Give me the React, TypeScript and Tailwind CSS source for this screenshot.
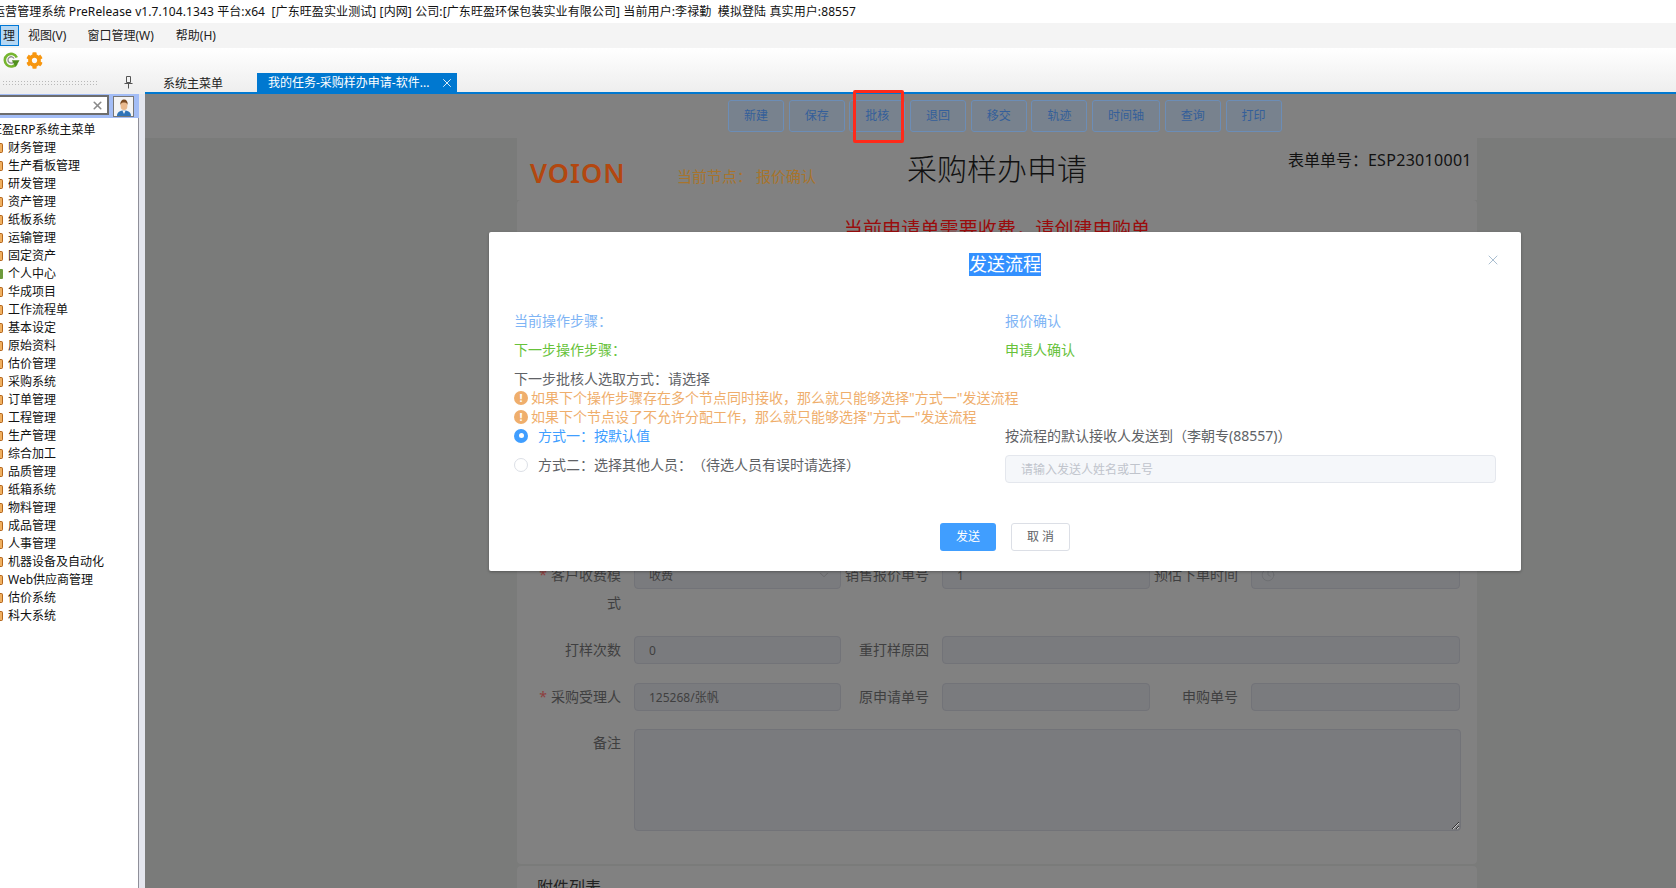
import { ChevronDown, Clock, X } from 'lucide-react';
import { FaCog } from 'react-icons/fa';

const menuItems = [
  '财务管理', '生产看板管理', '研发管理', '资产管理', '纸板系统', '运输管理', '固定资产', '个人中心', '华成项目',
  '工作流程单', '基本设定', '原始资料', '估价管理', '采购系统', '订单管理', '工程管理', '生产管理', '综合加工',
  '品质管理', '纸箱系统', '物料管理', '成品管理', '人事管理', '机器设备及自动化', 'Web供应商管理', '估价系统', '科大系统',
];

const actions = [
  { label: '新建', w: 'w-[56px]' },
  { label: '保存', w: 'w-[56px]' },
  { label: '批核', w: 'w-[56px]' },
  { label: '退回', w: 'w-[56px]' },
  { label: '移交', w: 'w-[56px]' },
  { label: '轨迹', w: 'w-[56px]' },
  { label: '时间轴', w: 'w-[68px]' },
  { label: '查询', w: 'w-[56px]' },
  { label: '打印', w: 'w-[56px]' },
];

function RefreshIcon() {
  return (
    <svg width="17" height="17" viewBox="0 0 17 17" fill="none">
      <path d="M13.500 11.500A6.300 6.300 0 1 1 13.800 5.500" stroke="#76b52f" strokeWidth="2.600" />
      <path d="M10.800 9.800A3.200 3.200 0 1 1 11 6.500" stroke="#8d8d8d" strokeWidth="1.300" />
      <path d="M8.800 8.200h7.700l-3.800 6.800z" fill="#4f8f1e" />
    </svg>
  );
}

function AvatarIcon() {
  return (
    <svg width="16" height="17" viewBox="0 0 16 17">
      <path d="M1 17c0-4 3-5.500 7-5.500s7 1.500 7 5.500z" fill="#2f74b8" />
      <path d="M6.400 11.500 8 15l1.600-3.500z" fill="#f4f4f4" />
      <ellipse cx="8" cy="6.500" rx="3.400" ry="4.600" fill="#e9b98e" />
      <path d="M4.400 6c-.4-3.600 1.600-5.500 3.800-5.500S12 2.400 11.600 6c-.6-1.800-1.800-2.400-3.600-2.400S5 4.200 4.400 6z" fill="#7a4a22" />
    </svg>
  );
}

function PinIcon() {
  return (
    <svg width="9" height="13" viewBox="0 0 9 13" fill="none" stroke="#555">
      <path d="M2.500 .5h4v6h-4z" />
      <path d="M.5 7.500h8M4.500 7.500v5" />
    </svg>
  );
}

function WarnIcon() {
  return (
    <span className="flex h-[14px] w-[14px] shrink-0 items-center justify-center rounded-full bg-[#efae6c] text-[11px] leading-none font-bold text-white">
      !
    </span>
  );
}

function Field({
  label,
  required,
  labelWidth,
  inputWidth,
  value,
  children,
}: {
  label: string;
  required?: boolean;
  labelWidth: string;
  inputWidth: string;
  value?: string;
  children?: React.ReactNode;
}) {
  return (
    <div className="flex items-start">
      <label className={`${labelWidth} shrink-0 pr-[13px] text-right text-[14px] leading-[28px] text-[#3f3f40]`}>
        {required && <span className="mr-1 text-[#8e3e3e]">*</span>}
        {label}
      </label>
      <div className={`${inputWidth} relative h-[28px] shrink-0`}>
        <input
          readOnly
          value={value ?? ''}
          className="h-full w-full rounded-[4px] border border-[#727378] bg-[#7a7b7e] px-[14px] text-[12px] text-[#3f3f40] outline-none"
        />
        {children}
      </div>
    </div>
  );
}

function TitleBar() {
  return (
    <div className="h-[23px] shrink-0 overflow-hidden bg-white pt-[3px] text-[12px] leading-[17px] tracking-[0.1px] whitespace-pre text-[#111]">
      <div className="ml-[-7px]">
        运营管理系统 PreRelease v1.7.104.1343 平台:x64  [广东旺盈实业测试] [内网] 公司:[广东旺盈环保包装实业有限公司] 当前用户:李禄勤  模拟登陆 真实用户:88557
      </div>
    </div>
  );
}

function MenuBar() {
  return (
    <div className="flex h-[25px] shrink-0 items-center bg-[#f4f4f4] text-[12px] text-[#222]">
      <div className="flex h-[21px] w-[19px] items-center justify-end border border-[#0078d7] bg-[#b5d7f3] pr-[3px]">理</div>
      <span className="ml-[9px]">视图(V)</span>
      <span className="ml-[21px]">窗口管理(W)</span>
      <span className="ml-[22px]">帮助(H)</span>
    </div>
  );
}

function Toolbar() {
  return (
    <div className="h-[44px] shrink-0 bg-gradient-to-b from-white to-[#eeeeee]">
      <div className="flex h-[24px] items-center gap-[6px] pl-[3px] pt-[1px]">
        <RefreshIcon />
        <FaCog size={17} color="#f7960f" />
      </div>
      <div className="flex h-[20px] items-center">
        <div className="ml-[2px] h-[5px] w-[97px] bg-[radial-gradient(#b9b9b9_0.8px,transparent_0.9px)] bg-[length:3px_3px]" />
        <div className="ml-[25px] flex w-[38px]">
          <PinIcon />
        </div>
        <div className="mr-[33px] w-[62px] pt-[3px] text-center text-[12px] text-[#222]">系统主菜单</div>
        <div className="mt-[1px] flex h-[19px] w-[200px] items-center bg-[#0078d0] pt-[1px] pl-[11px] text-[12px] text-white">
          <span className="w-[172px]">我的任务-采购样办申请-软件...</span>
          <X size={14} strokeWidth={1.5} />
        </div>
      </div>
    </div>
  );
}

function Sidebar() {
  return (
    <aside className="flex h-full w-[145px] shrink-0 flex-col bg-[#e4e6ee]">
      <div className="h-[2px] shrink-0 bg-[#eeeeee]" />
      <div className="flex h-[24px] w-[139px] shrink-0 items-start bg-[#a3bdf6] pt-[1px]">
        <div className="flex h-[20px] w-[109px] items-center justify-end border-y-2 border-r-2 border-[#6d6d6d] bg-white pr-[3px]">
          <X size={13} strokeWidth={3} color="#8a8a8a" />
        </div>
        <div className="mt-[1px] ml-[4px] flex h-[21px] w-[21px] items-end justify-center border border-[#777] bg-[#f4f4f4]">
          <AvatarIcon />
        </div>
      </div>
      <div className="min-h-0 w-[139px] flex-1 overflow-hidden border-r border-[#8f8f99] bg-white pt-[3px] text-[12px] leading-[18px] text-[#111]">
        <div className="ml-[-10px] whitespace-nowrap">旺盈ERP系统主菜单</div>
        {menuItems.map((item) => (
          <div key={item} className="flex h-[18px] items-center">
            <span
              className={
                item === '个人中心'
                  ? 'mr-[5px] h-[10px] w-[3px] rounded-r-[1px] bg-[#6d9a3c]'
                  : 'mr-[5px] h-[10px] w-[3px] rounded-r-[2px] border-y border-r border-[#b4661c] bg-[#f0b060]'
              }
            />
            <span className="whitespace-nowrap">{item}</span>
          </div>
        ))}
      </div>
    </aside>
  );
}

function RequestPage() {
  return (
    <main className="flex min-w-0 flex-1 flex-col overflow-hidden border-t-2 border-[#0078d0] bg-[#7a7b7a]">
      <div className="flex h-[44px] shrink-0 items-start gap-[4.7px] bg-[#818181] pt-[6px] pl-[583px]">
        {actions.map((a) => (
          <button
            key={a.label}
            className={`${a.w} h-[32px] rounded-[3px] border border-[#6c8db6] bg-[#78828e] text-[12px] text-[#345f9a]`}
          >
            {a.label}
          </button>
        ))}
      </div>

      <div className="ml-[372px] w-[960px]">
        <header className="relative flex h-[62px] items-start bg-[#818181]">
          <span className="mt-[19px] ml-[13px] w-[147px] text-[27px] leading-[32px] font-semibold tracking-[1px] text-[#b3470f]">VOION</span>
          <span className="mt-[27px] text-[15px] leading-[22px] whitespace-pre text-[#a8742c]">当前节点： 报价确认</span>
          <h1 className="mt-[12px] ml-[91px] text-[30px] leading-[38px] font-light text-[#111]">采购样办申请</h1>
          <span className="mt-[11px] ml-[201px] text-[16px] leading-[22px] whitespace-nowrap text-[#111]">
            表单单号：<span className="tracking-[0.3px]">ESP23010001</span>
          </span>
        </header>

        <section className="h-[664px] rounded-[4px] bg-[#818181] pt-[19px] pl-[13px]">
          <div className="pr-[13px] text-center text-[19px] leading-[20px] tracking-[0.15px] text-[#9a0c0c]">当前申请单需要收费，请创建申购单</div>

          <div className="mt-[322px] flex">
            <Field label="客户收费模式" required labelWidth="w-[104px]" inputWidth="w-[207px]" value="收费">
              <ChevronDown className="absolute top-[7px] right-[10px]" size={14} strokeWidth={1} color="#5a5a5c" />
            </Field>
            <Field label="销售报价单号" labelWidth="w-[101px]" inputWidth="w-[208px]" value="1" />
            <Field label="预估下单时间" labelWidth="w-[101px]" inputWidth="w-[209px]">
              <Clock className="absolute top-[7px] left-[10px]" size={14} strokeWidth={1} color="#66676a" />
            </Field>
          </div>

          <div className="mt-[19px] flex">
            <Field label="打样次数" labelWidth="w-[104px]" inputWidth="w-[207px]" value="0" />
            <Field label="重打样原因" labelWidth="w-[101px]" inputWidth="w-[518px]" />
          </div>

          <div className="mt-[19px] flex">
            <Field label="采购受理人" required labelWidth="w-[104px]" inputWidth="w-[207px]" value="125268/张帆" />
            <Field label="原申请单号" labelWidth="w-[101px]" inputWidth="w-[208px]" />
            <Field label="申购单号" labelWidth="w-[101px]" inputWidth="w-[209px]" />
          </div>

          <div className="mt-[18px] flex items-start">
            <label className="w-[104px] shrink-0 pr-[13px] text-right text-[14px] leading-[28px] text-[#3f3f40]">备注</label>
            <textarea
              readOnly
              className="h-[102px] w-[827px] rounded-[4px] border border-[#727378] bg-[#7a7b7e] outline-none"
            />
          </div>
        </section>

        <section className="mt-[2px] h-[60px] rounded-t-[4px] bg-[#818181] pt-[10px] pl-[20px] text-[16px] leading-[22px] text-[#222]">附件列表</section>
      </div>
    </main>
  );
}

function SendDialog() {
  return (
    <div className="absolute top-[232px] left-[489px] h-[339px] w-[1032px] rounded-[2px] bg-white px-[25px] text-[14px] text-[#606266] shadow-[0_1px_3px_rgba(0,0,0,0.3)]">
      <div className="relative flex h-[62px] items-start justify-center pt-[21px]">
        <span className="bg-[#3390ff] text-[18px] leading-[23px] text-white">发送流程</span>
        <X className="absolute top-[20px] right-[-5px]" size={16} strokeWidth={1} color="#7f9db8" />
      </div>

      <div className="mt-[17px] grid grid-cols-[491px_1fr] gap-y-[9px] leading-[20px]">
        <span className="text-[#7eb4f5]">当前操作步骤：</span>
        <span className="text-[#7eb4f5]">报价确认</span>
        <span className="text-[#67c23a]">下一步操作步骤：</span>
        <span className="text-[#67c23a]">申请人确认</span>
      </div>

      <div className="mt-[9px] grid grid-cols-[491px_1fr]">
        <div className="leading-[19px] whitespace-nowrap">
          <div>下一步批核人选取方式：请选择</div>
          <div className="flex items-center gap-[3px] text-[#efae6c]">
            <WarnIcon />
            如果下个操作步骤存在多个节点同时接收，那么就只能够选择"方式一"发送流程
          </div>
          <div className="flex items-center gap-[3px] text-[#efae6c]">
            <WarnIcon />
            如果下个节点设了不允许分配工作，那么就只能够选择"方式一"发送流程
          </div>
          <div className="flex items-center text-[#409eff]">
            <span className="mr-[10px] flex h-[14px] w-[14px] items-center justify-center rounded-full bg-[#409eff]">
              <span className="h-[5px] w-[5px] rounded-full bg-white" />
            </span>
            方式一：按默认值
          </div>
          <div className="mt-[10px] flex items-center">
            <span className="mr-[10px] h-[14px] w-[14px] rounded-full border border-[#dcdfe6] bg-white" />
            <span>方式二：选择其他人员：</span>
            <span>（待选人员有误时请选择）</span>
          </div>
        </div>
        <div className="pt-[57px]">
          <div className="leading-[19px]">按流程的默认接收人发送到（李朝专(88557)）</div>
          <input
            disabled
            placeholder="请输入发送人姓名或工号"
            className="mt-[10px] h-[28px] w-full rounded-[4px] border border-[#e4e7ed] bg-[#f5f7fa] px-[15px] text-[12px] outline-none placeholder:text-[#c0c4cc]"
          />
        </div>
      </div>

      <div className="mt-[40px] flex justify-center gap-[15px]">
        <button className="h-[28px] w-[56px] rounded-[3px] bg-[#409eff] text-[12px] text-white">发送</button>
        <button className="h-[28px] w-[59px] rounded-[3px] border border-[#dcdfe6] bg-white text-[12px] text-[#606266]">取 消</button>
      </div>
    </div>
  );
}

export default function App() {
  return (
    <div className="relative flex h-[888px] w-[1676px] flex-col overflow-hidden bg-white font-['Noto_Sans','Noto_Sans_CJK_SC',sans-serif]">
      <TitleBar />
      <MenuBar />
      <Toolbar />
      <div className="flex min-h-0 flex-1">
        <Sidebar />
        <RequestPage />
      </div>

      <SendDialog />

      {/* red annotation box around the approve button */}
      <div className="absolute top-[90px] left-[853px] h-[53px] w-[51px] rounded-[2px] border-[3px] border-[#ff2a1a]" />
    </div>
  );
}
